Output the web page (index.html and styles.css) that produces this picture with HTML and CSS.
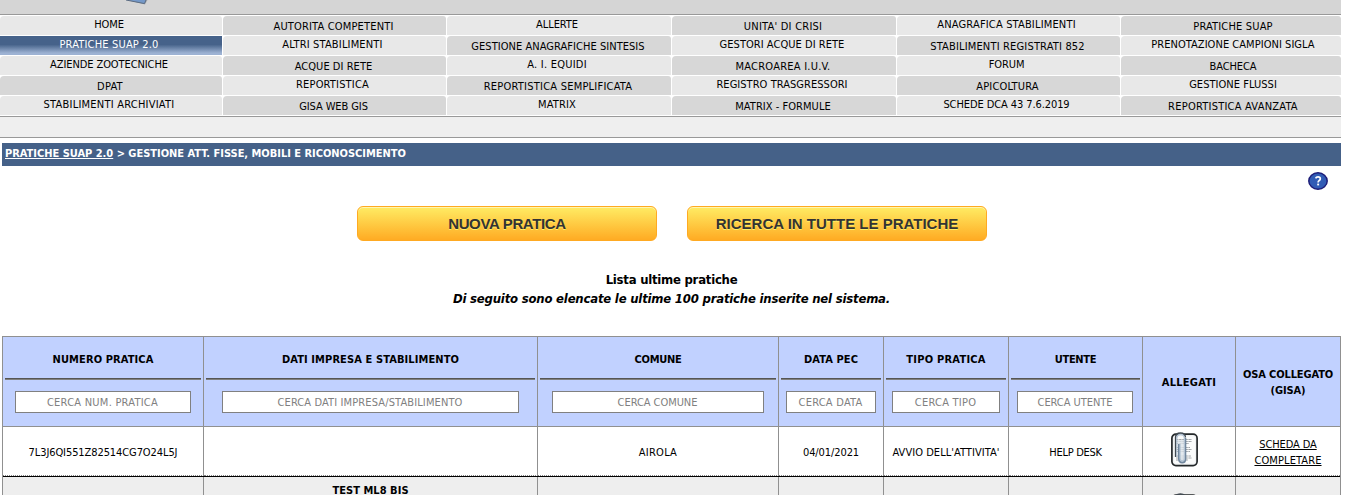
FILE: index.html
```html
<!DOCTYPE html>
<html lang="it">
<head>
<meta charset="utf-8">
<title>Pratiche SUAP 2.0</title>
<link rel="stylesheet" href="styles.css">
</head>
<body>
<div class="page">
  <header class="banner">
    <svg class="banner-logo" width="40" height="14" viewBox="0 0 40 14"><path d="M6 0 24 4.5 26.5 0Z" fill="#a8abb0"/><path d="M5 0 23.5 3.8 25 0Z" fill="#7599c9"/><path d="M5 0 23.5 3.6 25 0" fill="none" stroke="#5d6c80" stroke-width="1"/></svg>
  </header>
  <nav class="menu">
    <a class="close">HOME</a><a class="dark">AUTORITA COMPETENTI</a><a class="close">ALLERTE</a><a class="dark loose">UNITA' DI CRISI</a><a>ANAGRAFICA STABILIMENTI</a><a class="dark last">PRATICHE SUAP</a>
    <a class="current">PRATICHE SUAP 2.0</a><a>ALTRI STABILIMENTI</a><a class="dark snug">GESTIONE ANAGRAFICHE SINTESIS</a><a class="snug">GESTORI ACQUE DI RETE</a><a class="dark">STABILIMENTI REGISTRATI 852</a><a class="snug last">PRENOTAZIONE CAMPIONI SIGLA</a>
    <a class="close">AZIENDE ZOOTECNICHE</a><a class="dark snug">ACQUE DI RETE</a><a class="loose">A. I. EQUIDI</a><a class="dark loose">MACROAREA I.U.V.</a><a class="close">FORUM</a><a class="dark close last">BACHECA</a>
    <a class="dark loose">DPAT</a><a>REPORTISTICA</a><a class="dark loose">REPORTISTICA SEMPLIFICATA</a><a class="snug">REGISTRO TRASGRESSORI</a><a class="dark">APICOLTURA</a><a class="snug last">GESTIONE FLUSSI</a>
    <a class="loose">STABILIMENTI ARCHIVIATI</a><a class="dark close">GISA WEB GIS</a><a>MATRIX</a><a class="dark snug">MATRIX - FORMULE</a><a class="close">SCHEDE DCA 43 7.6.2019</a><a class="dark loose last">REPORTISTICA AVANZATA</a>
  </nav>
  <div class="submenu"></div>
  <div class="trail"><span class="trail-link">PRATICHE SUAP 2.0</span> &gt; GESTIONE ATT. FISSE, MOBILI E RICONOSCIMENTO</div>
  <div class="help">
    <svg width="20" height="18" viewBox="0 0 20 18"><ellipse cx="10" cy="9" rx="9.2" ry="8.2" fill="#315cb5" stroke="#1d1d78" stroke-width="1.5"/><path d="M7.6 6.3Q8.2 4.9 10 4.9Q12.3 4.9 12.3 6.7Q12.3 7.8 11.2 8.5Q10.1 9.2 10.1 10.4" fill="none" stroke="#fff" stroke-width="1.7"/><path d="M9.2 11.6h1.9v1.8H9.2z" fill="#fff"/></svg>
  </div>
  <div class="actions"><a class="button create">NUOVA PRATICA</a><a class="button">RICERCA IN TUTTE LE PRATICHE</a></div>
  <div class="intro"><p class="list-title">Lista ultime pratiche</p><p class="list-note">Di seguito sono elencate le ultime 100 pratiche inserite nel sistema.</p></div>
  <div class="table">
    <div class="row head">
      <div class="cell"><b>NUMERO PRATICA</b><i class="rule"></i><span class="field w1 loose">CERCA NUM. PRATICA</span></div>
      <div class="cell"><b>DATI IMPRESA E STABILIMENTO</b><i class="rule"></i><span class="field w2">CERCA DATI IMPRESA/STABILIMENTO</span></div>
      <div class="cell"><b class="tight">COMUNE</b><i class="rule"></i><span class="field w3 close">CERCA COMUNE</span></div>
      <div class="cell"><b>DATA PEC</b><i class="rule"></i><span class="field w4 loose">CERCA DATA</span></div>
      <div class="cell"><b class="loose">TIPO PRATICA</b><i class="rule"></i><span class="field w5 loose">CERCA TIPO</span></div>
      <div class="cell"><b class="tight">UTENTE</b><i class="rule"></i><span class="field w6 close">CERCA UTENTE</span></div>
      <div class="cell plain"><b class="loose">ALLEGATI</b></div>
      <div class="cell plain"><b class="close">OSA COLLEGATO<br>(GISA)</b></div>
    </div>
    <div class="row">
      <div class="cell close">7L3J6QI551Z82514CG7O24L5J</div>
      <div class="cell"></div>
      <div class="cell loose">AIROLA</div>
      <div class="cell close">04/01/2021</div>
      <div class="cell snug">AVVIO DELL'ATTIVITA'</div>
      <div class="cell tight">HELP DESK</div>
      <div class="cell clip-cell">
        <svg width="28" height="36" viewBox="0 0 28 36"><rect x=".9" y="2.2" width="25.2" height="31.4" rx="4" fill="#f1f3f4" stroke="#24282a" stroke-width="1.7"/><rect x="3" y="4.2" width="21" height="27.4" rx="2" fill="#fff" opacity=".7"/><path d="M5 7.5h16M5 9.5h16M5 11.5h13M5 15.5h14M5 17.5h16M5 19.5h14M5 24h15M5 26h16M5 28h12" stroke="#a0a4a8" stroke-width="1" stroke-dasharray="2.5 .6"/><path d="M6 8h8v22H8z" fill="#dbe3ea" opacity=".75"/><path d="M14.3 6V27Q14.3 30.5 11.2 30.5T8 27V12" fill="none" stroke="#71879e" stroke-width="2"/><path d="M4.6 25V5.5Q4.6 .9 9.4 .9T14.4 5.5" fill="none" stroke="#414a52" stroke-width="1.5"/><path d="M5.8 25V6.5Q5.8 2.5 9.6 2.5T13.4 6.5V26.5Q13.4 29 11.2 29T9 26V12" fill="none" stroke="#b3c3d3" stroke-width="1.3"/></svg>
      </div>
      <div class="cell"><u class="close">SCHEDA DA</u><u>COMPLETARE</u></div>
    </div>
    <div class="row alternate">
      <div class="cell"></div><div class="cell"><b class="snug">TEST ML8 BIS</b></div><div class="cell"></div><div class="cell"></div><div class="cell"></div><div class="cell"></div>
      <div class="cell clip-cell"><svg width="28" height="36" viewBox="0 0 28 36"><rect x=".9" y="2.2" width="25.2" height="31.4" rx="4" fill="#f1f3f4" stroke="#24282a" stroke-width="1.7"/><path d="M4.6 25V5.5Q4.6 .9 9.4 .9T14.4 5.5" fill="none" stroke="#414a52" stroke-width="1.5"/></svg></div>
      <div class="cell"></div>
    </div>
  </div>
</div>
</body>
</html>
```
FILE: styles.css
```css
* { box-sizing: border-box; }
html { overflow: hidden; }
body { margin: 0; height: 495px; overflow: hidden; background: #fff; color: #000; font: 11px/16px "DejaVu Sans Condensed", "DejaVu Sans", sans-serif; font-stretch: condensed; }
p { margin: 0; }
.page { width: 1341px; height: 495px; overflow: hidden; }
.banner { height: 15px; background: #d5d5d5; border-bottom: 1px solid #999; overflow: hidden; }
.banner-logo { display: block; margin-left: 121px; }
.menu { display: grid; grid-template-columns: 222px 223px 224px 224px 223px 220px; grid-auto-rows: 19px; gap: 1px; padding: 1px 0; letter-spacing: .17px; }
.menu a { display: block; overflow: hidden; white-space: nowrap; text-align: center; background: #e8e8e8; border-radius: 4px 3px 0 0; padding: 1px 4px 0 0; line-height: 16px; }
.menu a.dark { background: #d7d7d7; padding: 3px 2px 0 0; }
.menu a.last { padding-left: 4px; padding-right: 0; }
.menu a.current { color: #fff; border-radius: 0; background: linear-gradient(#46628a 0, #46628a 45%, #9db2d3 90%); }
.tight { letter-spacing: -.3px; }
.close { letter-spacing: -.09px; }
.snug { letter-spacing: .04px; }
.loose { letter-spacing: .23px; }
.submenu { height: 22px; background: #efefef; border: solid #999; border-width: 1px 0; }
.trail { height: 23px; margin: 5px 0 0 2px; padding: 3px 3px; background: #456188; color: #fff; font-weight: bold; letter-spacing: -.02px; }
.trail-link { text-decoration: underline; }
.help { height: 40px; padding: 6px 13px 0 0; display: flex; justify-content: flex-end; }
.actions { display: flex; gap: 30px; padding-left: 357px; }
.button { width: 300px; height: 35px; border: 1px solid #ffaa22; border-radius: 6px; background: linear-gradient(#ffec64, #ffab23); box-shadow: inset 0 1px 0 #fff6af; color: #333; font: bold 15px/33px "Liberation Sans", Arial, sans-serif; text-align: center; text-shadow: 0 1px 0 #ffee66; }
.create { letter-spacing: -.35px; }
.intro { margin: 29px 0 28px 2px; text-align: center; font-size: 13px; font-weight: bold; line-height: 19px; letter-spacing: -.25px; }
.list-note { font-style: italic; letter-spacing: -.21px; }
.table { margin-left: 2px; border: 1px solid #909090; border-bottom: 0; }
.row { display: grid; grid-template-columns: 201px 334px 241px 105px 125px 134px 93px 104px; height: 50px; border-bottom: 1px solid #000; background: #fff; }
.cell { display: flex; flex-direction: column; align-items: center; justify-content: center; text-align: center; white-space: nowrap; padding-top: 3px; border-right: 1px solid #909090; border-bottom: 1px dotted #888; }
.cell:last-child { border-right: 0; }
.row.head { height: 90px; background: #c1d1ff; border-bottom-color: #909090; }
.head .cell { justify-content: flex-start; padding: 15px 2px 0; border-bottom: 0; }
.head .plain { justify-content: center; padding-top: 2px; }
.head b, u { letter-spacing: .1px; }
.head b.tight { letter-spacing: -.3px; }
.head b.close, u.close { letter-spacing: -.12px; }
.head b.loose { letter-spacing: .25px; }
.rule { display: block; width: 100%; height: 2px; margin: 10px 0 11px; border-top: 1px solid #555; background: #808080; }
.field { height: 22px; border: 1px solid #808080; background: #fff; color: #808080; line-height: 22px; letter-spacing: .12px; }
.field.close { letter-spacing: -.05px; }
.field.loose { letter-spacing: .24px; }
.w1, .w2, .w3, .w4, .w5, .w6 { position: relative; left: -.5px; }
.w1 { width: 176px; }
.w2 { width: 297px; }
.w3 { width: 212px; }
.w4 { width: 90px; }
.w5 { width: 108px; }
.w6 { width: 116px; }
.clip-cell { padding: 0 9px 2px 0; }
.alternate { height: 60px; background: #eee; }
.alternate .cell { justify-content: flex-start; padding-top: 6px; }
.alternate .clip-cell { padding-top: 16px; }
```
